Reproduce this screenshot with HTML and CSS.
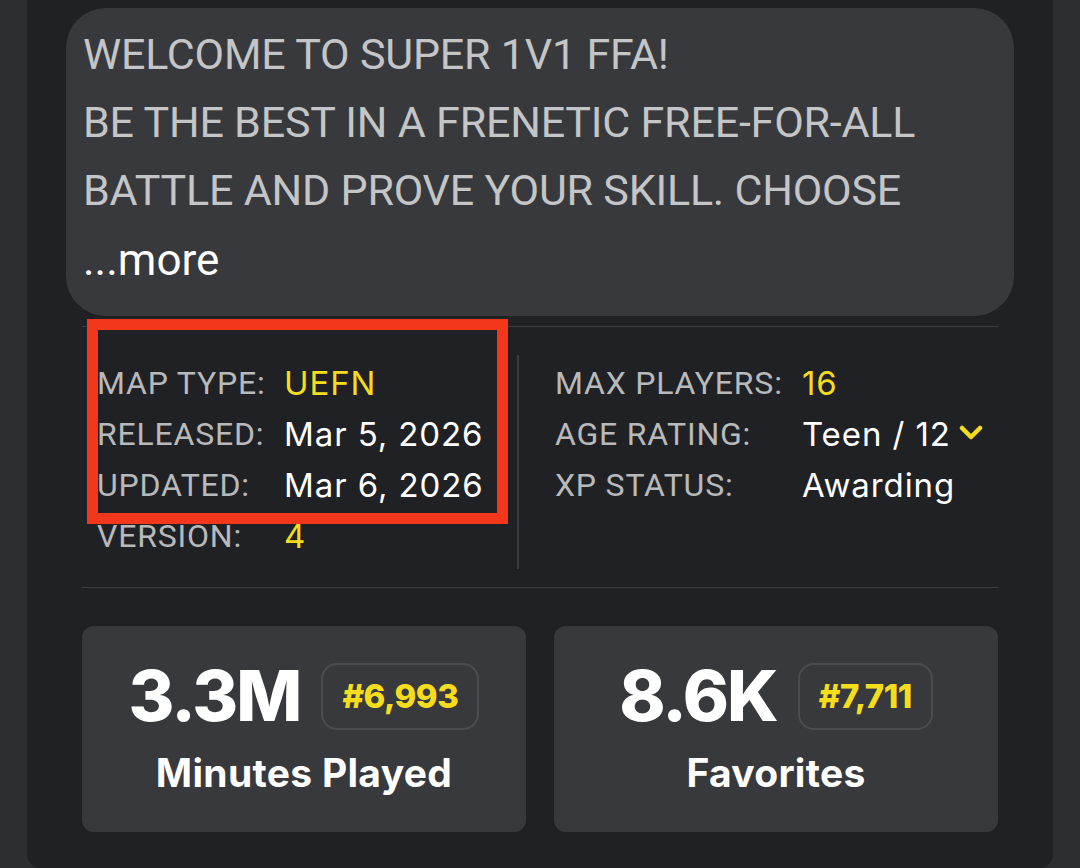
FILE: index.html
```html
<!DOCTYPE html>
<html lang="en">
<head>
<meta charset="utf-8">
<title>Super 1v1 FFA</title>
<link rel="stylesheet" href="styles.css">
</head>
<body>
<div class="panel">
  <div class="desc">
    <div class="desc-line">WELCOME TO SUPER 1V1 FFA!</div>
    <div class="desc-line">BE THE BEST IN A FRENETIC FREE-FOR-ALL</div>
    <div class="desc-line">BATTLE AND PROVE YOUR SKILL. CHOOSE</div>
    <div class="desc-more">...more</div>
  </div>

  <div class="section">
    <div class="divider"></div>
    <div class="info">
      <div class="col col-left">
        <div class="row"><span class="label label-l">MAP TYPE:</span><span class="value yellow">UEFN</span></div>
        <div class="row"><span class="label label-l">RELEASED:</span><span class="value">Mar 5, 2026</span></div>
        <div class="row"><span class="label label-l">UPDATED:</span><span class="value">Mar 6, 2026</span></div>
        <div class="row"><span class="label label-l">VERSION:</span><span class="value yellow">4</span></div>
      </div>
      <div class="vsep"></div>
      <div class="col col-right">
        <div class="row"><span class="label label-r">MAX PLAYERS:</span><span class="value yellow">16</span></div>
        <div class="row"><span class="label label-r">AGE RATING:</span><span class="value">Teen / 12</span>
          <svg class="chev" width="24" height="16" viewBox="0 0 24 16"><path d="M3 3 L12 12 L21 3" fill="none" stroke="#f5dd1c" stroke-width="4.5" stroke-linecap="round" stroke-linejoin="round"/></svg>
        </div>
        <div class="row"><span class="label label-r">XP STATUS:</span><span class="value">Awarding</span></div>
      </div>
      <div class="annot"></div>
    </div>
    <div class="divider"></div>

    <div class="stats">
      <div class="stat">
        <div class="stat-top">
          <span class="stat-num">3.3M</span>
          <span class="badge">#6,993</span>
        </div>
        <div class="stat-label">Minutes Played</div>
      </div>
      <div class="stat">
        <div class="stat-top">
          <span class="stat-num">8.6K</span>
          <span class="badge">#7,711</span>
        </div>
        <div class="stat-label">Favorites</div>
      </div>
    </div>
  </div>
</div>
</body>
</html>
```

FILE: styles.css
```css
* { box-sizing: border-box; }
html, body { margin: 0; padding: 0; }
body {
  background: #2d2e32;
  width: 1080px;
  height: 868px;
  overflow: hidden;
  font-family: "Inter", "Roboto", sans-serif;
}
.panel {
  margin: 0 27px;
  min-height: 868px;
  background: #202124;
  border-radius: 0 0 14px 14px;
  padding: 8px 39px 0;
}
.desc {
  background: #38393d;
  border-radius: 40px;
  height: 308px;
  padding: 12px 17px 0;
  font-family: "Roboto", sans-serif;
  font-size: 43px;
  letter-spacing: -0.2px;
  line-height: 68px;
  color: #c4c5c7;
}
.desc-line { white-space: nowrap; }
.desc-more { color: #ffffff; letter-spacing: 0; font-size: 44px; margin-top: 2px; }
.section {
  padding: 10px 16px 0;
}
.divider {
  height: 1px;
  background: #3c3d41;
}
.info {
  position: relative;
  display: flex;
  padding: 31px 0 18px;
  font-size: 32px;
  line-height: 51px;
}
.col-left {
  padding-left: 15px;
  width: 435px;
  padding-bottom: 7px;
}
.vsep {
  width: 2px;
  margin-top: -3px;
  background: #3a3b3f;
}
.col-right {
  padding-left: 36px;
}
.row {
  display: flex;
  align-items: center;
  white-space: nowrap;
}
.label {
  color: #b8b9bb;
  font-family: "Roboto", sans-serif;
  letter-spacing: 0.8px;
}
.label-l { width: 187px; }
.label-r { width: 247px; }
.value {
  color: #ffffff;
  font-size: 33px;
  letter-spacing: 0.9px;
}
.yellow { color: #f5dd1c; }
.chev { margin-left: 8px; margin-top: -4px; }
.annot {
  position: absolute;
  left: 5px;
  top: -8px;
  width: 421px;
  height: 205px;
  border: 11px solid #f2371a;
}
.stats {
  display: flex;
  gap: 28px;
  margin-top: 38px;
}
.stat {
  flex: 1;
  height: 206px;
  background: #38393d;
  border-radius: 12px;
  padding-top: 35px;
  display: flex;
  flex-direction: column;
  align-items: center;
}
.stat-top {
  display: flex;
  align-items: center;
  gap: 21px;
}
.stat-num {
  font-size: 70px;
  line-height: 70px;
  font-weight: 800;
  color: #ffffff;
  letter-spacing: -2px;
}
.badge {
  height: 67px;
  border: 2px solid #4b4c50;
  border-radius: 16px;
  padding: 0 19px;
  display: flex;
  align-items: center;
  font-size: 33px;
  font-weight: 800;
  color: #f5dd1c;
  letter-spacing: -0.5px;
}
.stat-label {
  margin-top: 22px;
  font-size: 39px;
  line-height: 39px;
  font-weight: 700;
  color: #ffffff;
  letter-spacing: 0.3px;
}
```
